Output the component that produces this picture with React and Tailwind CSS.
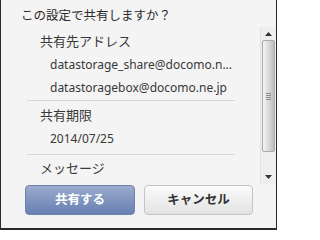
import React from 'react';

const font = { fontFamily: '"Noto Sans", "Noto Sans CJK JP", sans-serif' };

const Section = ({ label, values, className }) => (
    <div className={className}>
        <div className="h-[23px] leading-[23px] pl-[13px] text-[13px]">{label}</div>
        {values.map(v => (
            <div key={v} className="h-[23px] leading-[23px] pl-[23px] text-[12px] whitespace-nowrap">{v}</div>
        ))}
    </div>
);

const ScrollBar = () => (
    <div className="w-[16px] flex flex-col bg-[#eeeeee] border-l border-[#e2e2e2]">
        {/* up arrow */}
        <div className="h-[13px] flex items-center justify-center">
            <svg width="7" height="4" viewBox="0 0 7 4"><path d="M0 4 L3.5 0 L7 4 Z" fill="#333" /></svg>
        </div>
        {/* thumb */}
        <div className="h-[112px] mx-[1px] rounded-[2px] border border-[#a9a9a9] bg-gradient-to-r from-[#f4f4f4] via-[#dadada] to-[#bdbdbd] flex items-center justify-center">
            <div className="flex flex-col gap-[1px]">
                <div className="w-[5px] h-[1px] bg-[#8c8c8c]" />
                <div className="w-[5px] h-[1px] bg-[#8c8c8c]" />
                <div className="w-[5px] h-[1px] bg-[#8c8c8c]" />
                <div className="w-[5px] h-[1px] bg-[#8c8c8c]" />
            </div>
        </div>
        <div className="flex-1" />
        {/* down arrow */}
        <div className="h-[15px] flex items-center justify-center">
            <svg width="7" height="4" viewBox="0 0 7 4"><path d="M0 0 L3.5 4 L7 0 Z" fill="#333" /></svg>
        </div>
    </div>
);

const App = () => {
    return (
        <div className="w-[277px] h-[230px] bg-[#f4f4f4] border-l border-r border-b-2 border-[#2b2b2b] flex flex-col text-[#383838] overflow-hidden" style={font}>
            {/* Title */}
            <div className="h-[27px] pt-[4px] pl-[20px] leading-[23px] text-[12.5px] text-[#2a2a2a]">この設定で共有しますか？</div>

            {/* Scroll area */}
            <div className="h-[157px] flex">
                <div className="flex-1 overflow-hidden pl-[26px] pr-[25px]">
                    <Section className="pt-[3px] pb-[1px] border-b border-[#d6d6d6]" label="共有先アドレス" values={['datastorage_share@docomo.n...', 'datastoragebox@docomo.ne.jp']} />
                    <Section className="pt-[3px] pb-[4px] border-b border-[#d6d6d6]" label="共有期限" values={['2014/07/25']} />
                    <Section className="pt-[2px]" label="メッセージ" values={[]} />
                </div>
                <ScrollBar />
            </div>

            {/* Buttons */}
            <div className="flex gap-[9px] pl-[24px] pt-[1px]">
                <button className="w-[110px] h-[30px] rounded-[4px] border border-[#6f82b0] bg-gradient-to-b from-[#9aabcd] to-[#687fb2] text-white text-[12.5px] font-bold">共有する</button>
                <button className="w-[109px] h-[30px] rounded-[4px] border border-[#c4c4c4] bg-gradient-to-b from-[#fbfbfb] to-[#e3e3e3] text-[#333333] text-[12.5px] font-bold">キャンセル</button>
            </div>
        </div>
    );
};

export default App;
